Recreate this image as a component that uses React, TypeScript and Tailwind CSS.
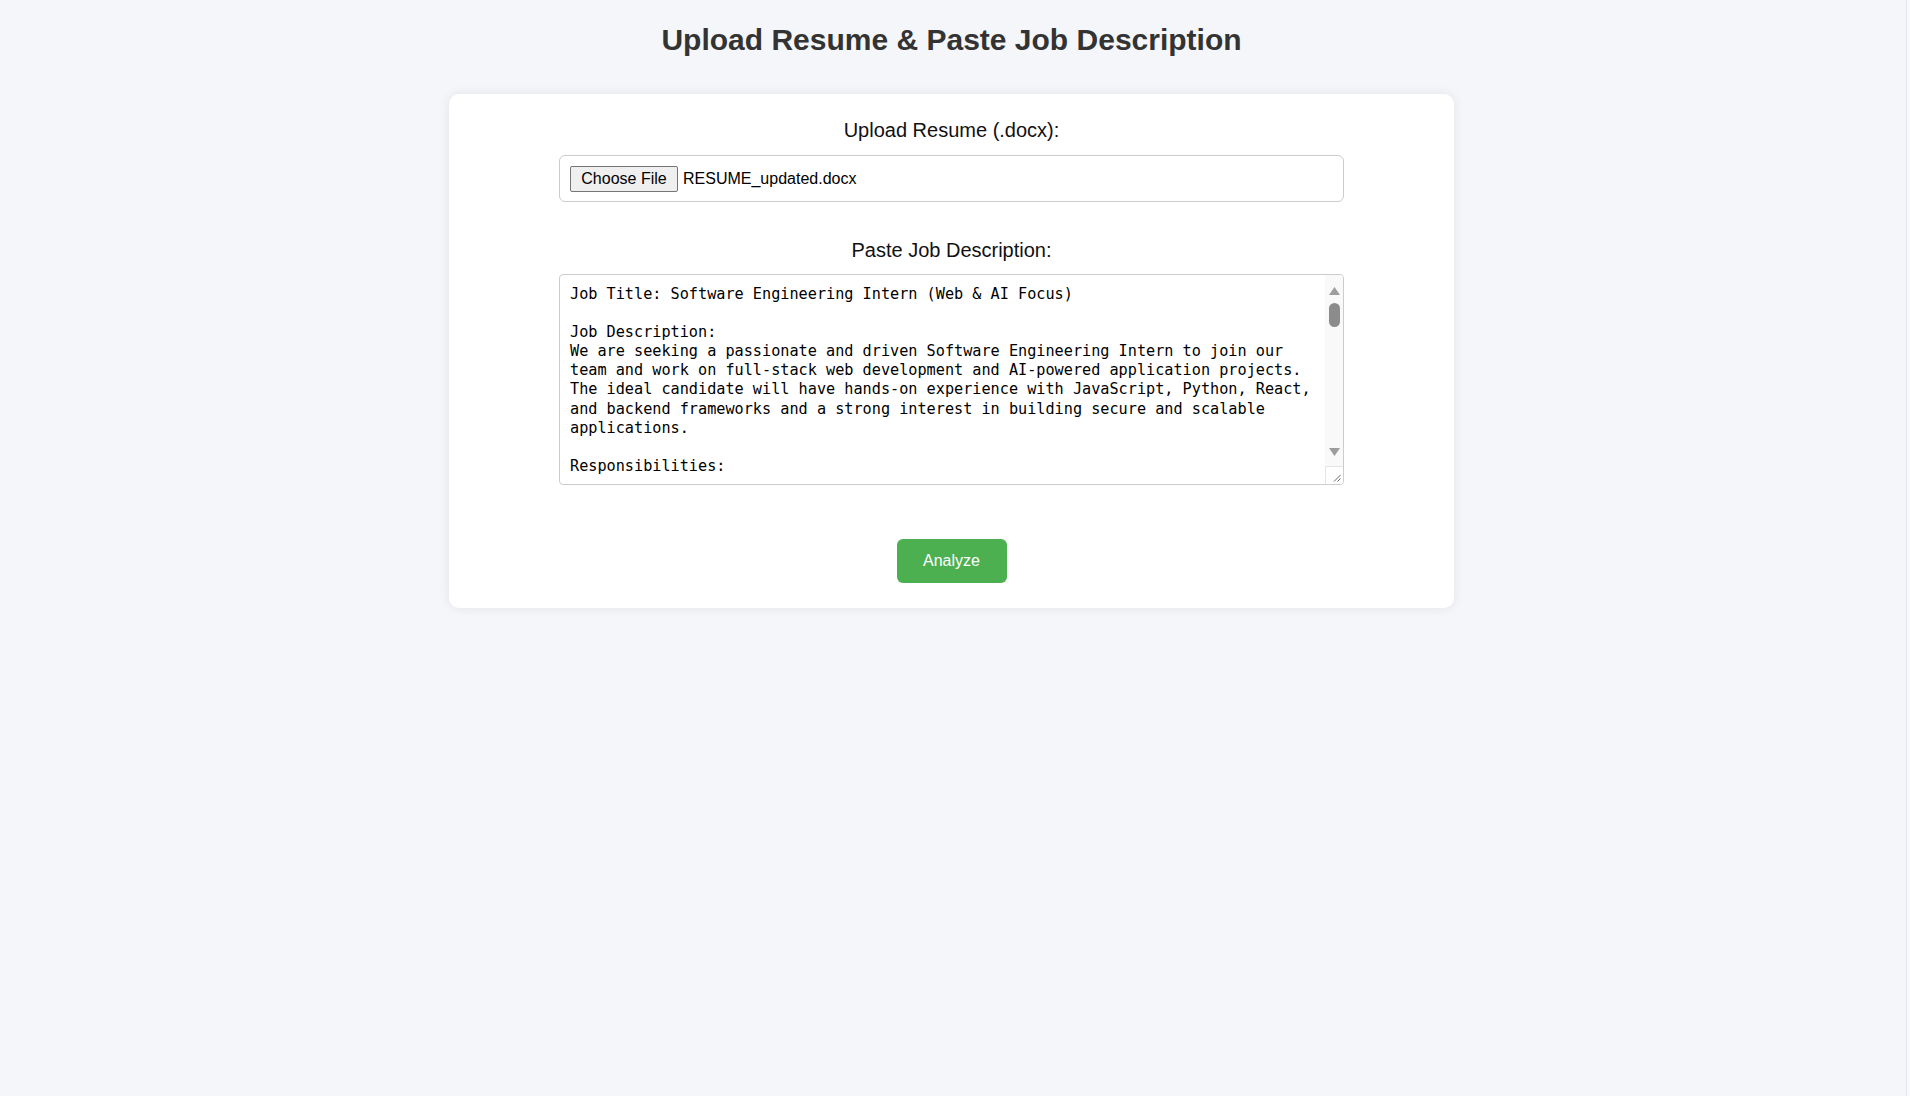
import { useState } from 'react';

const jobText = `Job Title: Software Engineering Intern (Web & AI Focus)

Job Description:
We are seeking a passionate and driven Software Engineering Intern to join our
team and work on full-stack web development and AI-powered application projects.
The ideal candidate will have hands-on experience with JavaScript, Python, React,
and backend frameworks and a strong interest in building secure and scalable
applications.

Responsibilities:

- Develop and maintain responsive web applications using React, HTML, CSS and
  JavaScript.
- Build RESTful APIs and backend services with Python (Flask/Django) or Node.js.
- Integrate machine learning and NLP models into production-ready features.
- Work with relational and NoSQL databases such as MySQL, PostgreSQL and MongoDB.
- Write clean, well-documented and testable code following best practices.
- Participate in code reviews, sprint planning and daily stand-up meetings.
- Debug, troubleshoot and optimize application performance.
- Collaborate with designers, product managers and senior engineers.
- Implement authentication, authorization and other security measures.
- Contribute to CI/CD pipelines and cloud deployments (AWS, GCP or Azure).

Requirements:

- Currently pursuing a Bachelor's or Master's degree in Computer Science,
  Information Technology or a related field.
- Strong understanding of data structures, algorithms and OOP concepts.
- Proficiency in at least one of: JavaScript, Python, Java or C++.
- Familiarity with React, Node.js, Express, Flask or Django.
- Experience with Git and GitHub for version control.
- Basic knowledge of machine learning libraries such as scikit-learn,
  TensorFlow or PyTorch is a plus.
- Good problem-solving skills and the ability to learn quickly.
- Excellent written and verbal communication skills.

Preferred Qualifications:

- Personal or academic projects involving web development or AI.
- Experience with Docker, Kubernetes or serverless platforms.
- Understanding of REST, GraphQL and WebSocket communication.
- Exposure to prompt engineering and large language model APIs.
- Knowledge of unit testing frameworks like Jest, PyTest or Mocha.

What We Offer:

- Mentorship from experienced engineers.
- Hands-on experience with real-world projects.
- Flexible working hours and a remote-friendly environment.
- Certificate of completion and letter of recommendation.
- Opportunity for a full-time offer based on performance.

Duration: 3 - 6 months
Location: Remote / Hybrid
Stipend: Competitive`;

export default function App() {
    const [description, setDescription] = useState(jobText);
    const [fileName] = useState('RESUME_updated.docx');

    return (
        <div className="min-h-screen w-full bg-[#f4f6f9] flex" style={{ fontFamily: '"Liberation Sans", Arial, sans-serif' }}>
            <div className="w-[1903px] flex flex-col items-center">
                <h1 className="mt-[23px] text-[30px] leading-[34px] font-bold text-[#333]">
                    Upload Resume &amp; Paste Job Description
                </h1>

                <div className="mt-[37px] w-[1005px] bg-white rounded-[10px] shadow-[0_0_12px_rgba(0,0,0,0.08)] pt-[25px] pb-[25px] flex flex-col items-center">
                    <label className="text-[20px] leading-[23px] text-[#111]">Upload Resume (.docx):</label>

                    <div className="mt-[13px] w-[785px] h-[47px] border border-[#ccc] rounded-[6px] px-[10px] flex items-center gap-[5px]">
                        <button className="w-[108px] h-[26px] bg-[#efefef] border border-[#767676] rounded-[2px] text-[16px] text-black flex items-center justify-center">
                            Choose File
                        </button>
                        <span className="text-[16px] text-black">{fileName}</span>
                    </div>

                    <label className="mt-[37px] text-[20px] leading-[23px] text-[#111]">Paste Job Description:</label>

                    {/* textarea box with a drawn scrollbar so it looks like the windows one */}
                    <div className="mt-[12px] w-[785px] h-[211px] border border-[#ccc] rounded-[4px] flex overflow-hidden">
                        <textarea
                            value={description}
                            onChange={(e) => setDescription(e.target.value)}
                            className="flex-1 h-full resize-none pl-[10px] pr-[4px] pt-[10px] pb-[8px] text-[15.2px] leading-[19.1px] text-black outline-none overflow-y-scroll [scrollbar-width:none]"
                            style={{ fontFamily: '"DejaVu Sans Mono", Consolas, monospace' }}
                        />
                        <div className="w-[18px] h-full flex flex-col">
                            <div className="flex-1 bg-[#f9f9f9] flex flex-col items-center">
                                <svg width="11" height="8" viewBox="0 0 11 8" className="mt-[12px]">
                                    <path d="M5.5 0 L11 8 L0 8 Z" fill="#9d9d9d" />
                                </svg>
                                <div className="mt-[8px] w-[11px] h-[24px] rounded-full bg-[#8c8c8c]" />
                                <div className="flex-1" />
                                <svg width="11" height="8" viewBox="0 0 11 8" className="mb-[10px]">
                                    <path d="M0 0 L11 0 L5.5 8 Z" fill="#9d9d9d" />
                                </svg>
                            </div>
                            <div className="h-[18px] bg-white border-t border-l border-[#e4e4e4] flex items-end justify-end p-[2px]">
                                <svg width="8" height="8" viewBox="0 0 8 8">
                                    <path d="M7.5 1 L1 7.5 M7.5 4.5 L4.5 7.5" stroke="#666" strokeWidth="1" />
                                </svg>
                            </div>
                        </div>
                    </div>

                    <button className="mt-[54px] w-[110px] h-[44px] bg-[#4caf50] hover:bg-[#45a049] rounded-[6px] text-white text-[16px]">
                        Analyze
                    </button>
                </div>
            </div>
            <div className="w-[3px]" />
            <div className="flex-1 border-l border-[#e3e5ea] bg-[#f8f9fb]" />
        </div>
    );
}
